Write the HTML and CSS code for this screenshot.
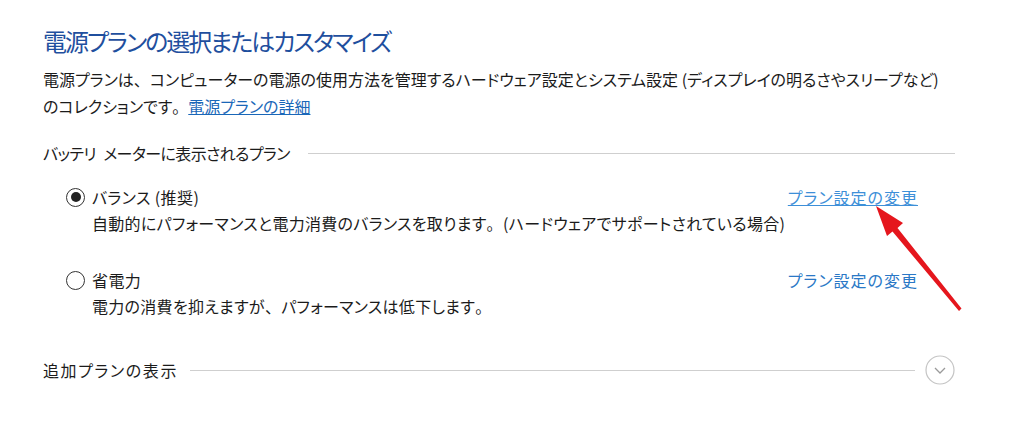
FILE: index.html
```html
<!DOCTYPE html>
<html lang="ja">
<head>
  <meta charset="UTF-8" />
  <title>電源オプション</title>
  <link rel="stylesheet" href="styles.css">
</head>
<body>

  <div class="page">
    <!-- タイトル -->
    <h1 class="title">電源プランの選択またはカスタマイズ</h1>
    <p class="intro">電源プランは<span class="p">、</span>コンピューターの電源の使用方法を管理するハードウェア設定とシステム設定 (ディスプレイの明るさやスリープなど)<br>のコレクションです<span class="p">。</span><a href="#" class="link">電源プランの詳細</a></p>

    <!-- バッテリ メーター -->
    <div class="section-head">
      <span>バッテリ&ensp;メーターに表示されるプラン</span>
      <span class="rule"></span>
    </div>

    <div class="plan">
      <div class="plan-top">
        <span class="radio checked"></span>
        <span class="plan-name">バランス (推奨)</span>
        <a href="#" class="change hover">プラン設定の変更</a>
      </div>
      <div class="plan-desc">自動的にパフォーマンスと電力消費のバランスを取ります<span class="p">。</span>(ハードウェアでサポートされている場合)</div>
    </div>

    <div class="plan">
      <div class="plan-top">
        <span class="radio"></span>
        <span class="plan-name">省電力</span>
        <a href="#" class="change">プラン設定の変更</a>
      </div>
      <div class="plan-desc">電力の消費を抑えますが<span class="p">、</span>パフォーマンスは低下します<span class="p">。</span></div>
    </div>

    <!-- 追加プラン -->
    <div class="section-head more">
      <span>追加プランの表示</span>
      <span class="rule"></span>
      <span class="expand">
        <svg width="30" height="30" viewBox="0 0 30 30">
          <circle cx="15" cy="15" r="14" fill="none" stroke="#c4c4c4" stroke-width="1.2"/>
          <path d="M10 13 L15 18 L20 13" fill="none" stroke="#9a9a9a" stroke-width="1.3"/>
        </svg>
      </span>
    </div>
  </div>

  <!-- 矢印 -->
  <svg class="arrow" width="1024" height="425" viewBox="0 0 1024 425">
    <path d="M876 206 L903 223 L897.5 228 L961.5 308.5 L959 311 L892.5 231.5 L887 236 Z" fill="#e5161d"/>
  </svg>

</body>
</html>
```

FILE: styles.css
```css
body {
  margin: 0;
  background: #ffffff;
  color: #1b1b1b;
  font-family: "Noto Sans CJK JP", "Noto Sans", sans-serif;
  font-feature-settings: "palt";
}

.page {
  padding: 24px 0 0 43px;
  width: 912px;
}

/* 句読点は全角幅のまま */
.p {
  font-feature-settings: normal;
}

.title {
  margin: 0;
  font-size: 24px;
  font-weight: normal;
  line-height: 34px;
  letter-spacing: -2px;
  color: #1f4f9e;
}

.intro {
  margin: 8px 0 0 0;
  font-size: 16px;
  line-height: 27px;
  white-space: nowrap;
}

.link {
  color: #1a67b8;
  text-decoration: underline;
}

.section-head {
  display: flex;
  align-items: center;
  gap: 18px;
  margin-top: 20px;
  font-size: 16px;
  line-height: 26px;
}

.section-head > span:first-child {
  letter-spacing: -0.6px;
}

.rule {
  flex: 1;
  height: 1px;
  background: #cfcfcf;
}

.plan {
  margin: 18px 0 0 23px;
  width: 852px;
}

.plan + .plan {
  margin-top: 31px;
}

.plan-top {
  display: flex;
  align-items: center;
  font-size: 16px;
  line-height: 26px;
}

.radio {
  width: 17px;
  height: 17px;
  border: 1.5px solid #333;
  border-radius: 50%;
  margin-right: 7px;
  display: flex;
  align-items: center;
  justify-content: center;
}

.radio.checked::after {
  content: "";
  width: 10px;
  height: 10px;
  border-radius: 50%;
  background: #222;
}

.plan-name {
  flex: 1;
  letter-spacing: 0.4px;
}

.change {
  color: #2a78c6;
  text-decoration: none;
  letter-spacing: 1px;
}

.change.hover {
  color: #3d8fd8;
  text-decoration: underline;
}

.plan-desc {
  margin-left: 26px;
  font-size: 16px;
  line-height: 26px;
  letter-spacing: 0.3px;
}

.section-head.more {
  margin-top: 36px;
  gap: 12px;
}

.section-head.more > span:first-child {
  letter-spacing: 1.6px;
}

.expand {
  display: flex;
  margin-left: -2px;
}

.arrow {
  position: absolute;
  left: 0;
  top: 0;
  pointer-events: none;
}
```
